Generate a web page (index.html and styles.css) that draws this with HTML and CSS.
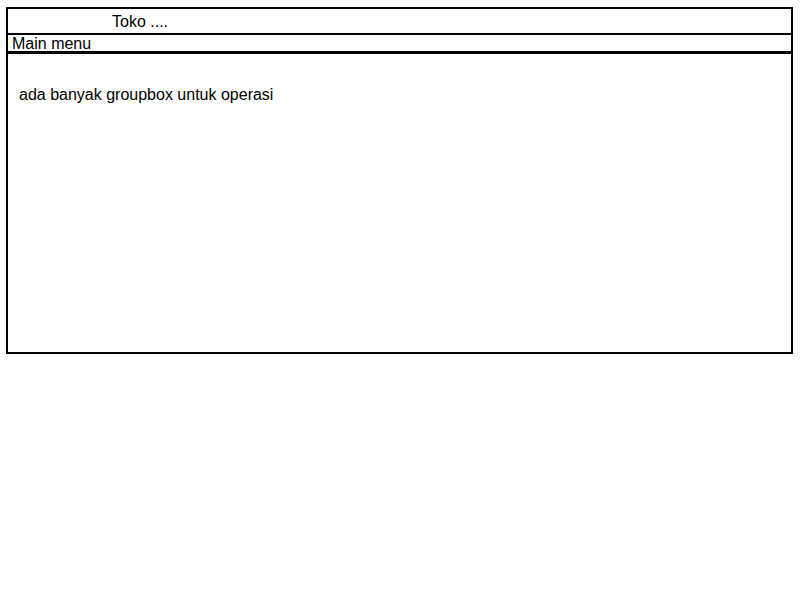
FILE: index.html
```html
<!DOCTYPE html>
<html>
<head>
<meta charset="utf-8">
<link rel="stylesheet" href="styles.css">
</head>
<body>
<div class="window">
  <div class="title">Toko ....</div>
  <div class="menu">Main menu</div>
  <div class="content">
    <p class="note">ada banyak groupbox untuk operasi</p>
  </div>
</div>
</body>
</html>
```
FILE: styles.css
```css
html, body {
  margin: 0;
  padding: 0;
  background: #fff;
}
body {
  padding: 7px 0 0 6px;
  font-family: "Liberation Sans", Arial, sans-serif;
  font-size: 16px;
  color: #000;
}
.window {
  width: 783px;
  height: 343px;
  border: 2px solid #000;
  display: flex;
  flex-direction: column;
}
.title {
  height: 23px;
  line-height: 24px;
  padding: 1px 0 0 104px;
  border-bottom: 2px solid #000;
}
.menu {
  height: 15px;
  line-height: 16px;
  padding: 1px 0 0 4px;
  border-bottom: 3px solid #000;
}
.content {
  flex: 1;
  padding: 32px 0 0 11px;
}
.note {
  margin: 0;
  line-height: 18px;
}
```
